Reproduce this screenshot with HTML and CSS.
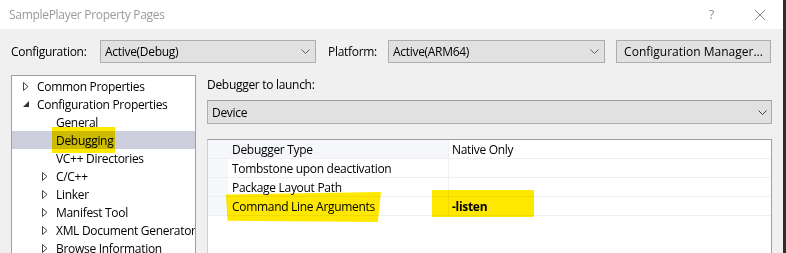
FILE: index.html
```html
<!DOCTYPE html>
<html lang="en">
<head>
  <meta charset="UTF-8">
  <title>SamplePlayer Property Pages</title>
  <link rel="stylesheet" href="styles.css">
</head>
<body>
  <div class="window">
    <div class="titlebar">
      <span class="title">SamplePlayer Property Pages</span>
      <span class="help">?</span>
      <span class="close">
        <svg width="12" height="12" viewBox="0 0 12 12"><path d="M1 1 L11 11 M11 1 L1 11" stroke="#8a8a8a" stroke-width="1" fill="none"/></svg>
      </span>
    </div>

    <div class="main">
      <div class="config-row">
        <label class="field-label">Configuration:</label>
        <div class="combo combo-config">
          <span>Active(Debug)</span>
          <svg class="chev" width="9" height="5" viewBox="0 0 9 5"><path d="M0.5 0.5 L4.5 4.5 L8.5 0.5" stroke="#606060" fill="none"/></svg>
        </div>
        <label class="field-label platform-label">Platform:</label>
        <div class="combo combo-platform">
          <span>Active(ARM64)</span>
          <svg class="chev" width="9" height="5" viewBox="0 0 9 5"><path d="M0.5 0.5 L4.5 4.5 L8.5 0.5" stroke="#606060" fill="none"/></svg>
        </div>
        <button class="btn">Configuration Manager...</button>
      </div>

      <div class="content">
        <div class="tree">
          <div class="node lvl0"><span class="tw"><svg width="6" height="9" viewBox="0 0 6 9"><path d="M0.5 0.5 L5 4.5 L0.5 8.5 Z" stroke="#444" fill="none"/></svg></span>Common Properties</div>
          <div class="node lvl0"><span class="tw"><svg width="6" height="6" viewBox="0 0 6 6"><path d="M6 0 L6 6 L0 6 Z" fill="#333"/></svg></span>Configuration Properties</div>
          <div class="node lvl1"><span class="tw"></span>General</div>
          <div class="node lvl1 selected"><span class="tw"></span><span class="marked mark-debugging">Debugging</span></div>
          <div class="node lvl1"><span class="tw"></span>VC++ Directories</div>
          <div class="node lvl1"><span class="tw"><svg width="6" height="9" viewBox="0 0 6 9"><path d="M0.5 0.5 L5 4.5 L0.5 8.5 Z" stroke="#444" fill="none"/></svg></span>C/C++</div>
          <div class="node lvl1"><span class="tw"><svg width="6" height="9" viewBox="0 0 6 9"><path d="M0.5 0.5 L5 4.5 L0.5 8.5 Z" stroke="#444" fill="none"/></svg></span>Linker</div>
          <div class="node lvl1"><span class="tw"><svg width="6" height="9" viewBox="0 0 6 9"><path d="M0.5 0.5 L5 4.5 L0.5 8.5 Z" stroke="#444" fill="none"/></svg></span>Manifest Tool</div>
          <div class="node lvl1"><span class="tw"><svg width="6" height="9" viewBox="0 0 6 9"><path d="M0.5 0.5 L5 4.5 L0.5 8.5 Z" stroke="#444" fill="none"/></svg></span>XML Document Generator</div>
          <div class="node lvl1"><span class="tw"><svg width="6" height="9" viewBox="0 0 6 9"><path d="M0.5 0.5 L5 4.5 L0.5 8.5 Z" stroke="#444" fill="none"/></svg></span>Browse Information</div>
        </div>

        <div class="page">
          <div class="page-label">Debugger to launch:</div>
          <div class="combo combo-debugger">
            <span>Device</span>
            <svg class="chev" width="9" height="5" viewBox="0 0 9 5"><path d="M0.5 0.5 L4.5 4.5 L8.5 0.5" stroke="#404040" fill="none"/></svg>
          </div>

          <div class="grid">
            <div class="prop current">
              <div class="gutter"></div>
              <div class="name">Debugger Type</div>
              <div class="value">Native Only</div>
            </div>
            <div class="prop">
              <div class="gutter"></div>
              <div class="name">Tombstone upon deactivation</div>
              <div class="value"></div>
            </div>
            <div class="prop">
              <div class="gutter"></div>
              <div class="name">Package Layout Path</div>
              <div class="value"></div>
            </div>
            <div class="prop">
              <div class="gutter"></div>
              <div class="name"><span class="marked mark-args">Command Line Arguments</span></div>
              <div class="value"><span class="mark-value"></span><b>-listen</b></div>
            </div>
          </div>
        </div>
      </div>
    </div>
  </div>
  <div class="edge"></div>
</body>
</html>
```

FILE: styles.css
```css
* {
  margin: 0;
  padding: 0;
  box-sizing: border-box;
}

body {
  font-family: 'Open Sans', 'Noto Sans', sans-serif;
  font-size: 12px;
  letter-spacing: -0.3px;
  color: #000;
  width: 786px;
  height: 253px;
  overflow: hidden;
  display: flex;
  background: #f0f0f0;
}

.window {
  flex: 1;
  display: flex;
  flex-direction: column;
  min-width: 0;
}

.edge {
  width: 3px;
  background: #2e2e2e;
}

.titlebar {
  height: 29px;
  background: #fff;
  display: flex;
  align-items: center;
  padding-left: 9px;
}

.title {
  color: #9a9a9a;
  flex: 1;
}

.help {
  color: #8a8a8a;
  width: 14px;
  margin-right: 31px;
}

.close {
  width: 12px;
  height: 12px;
  margin-right: 17px;
  display: flex;
}

.main {
  flex: 1;
  padding: 11px 11px 0 11px;
  display: flex;
  flex-direction: column;
  min-height: 0;
}

/* top row with configuration / platform */
.config-row {
  display: flex;
  align-items: center;
  height: 23px;
}

.field-label {
  width: 89px;
}

.platform-label {
  width: 60px;
  margin-left: 12px;
}

.combo {
  height: 23px;
  background: #e1e1e1;
  border: 1px solid #adadad;
  display: flex;
  align-items: center;
  padding-left: 4px;
  padding-right: 5px;
}

.combo span {
  flex: 1;
}

.combo-config {
  width: 216px;
}

.combo-platform {
  width: 217px;
}

.btn {
  font: inherit;
  margin-left: 11px;
  width: 155px;
  height: 23px;
  background: #e1e1e1;
  border: 1px solid #adadad;
  color: #000;
}

.content {
  flex: 1;
  display: flex;
  margin-top: 12px;
  min-height: 0;
}

/* category tree */
.tree {
  width: 185px;
  background: #fff;
  border: 1px solid #a0a0a0;
  border-bottom: none;
  padding-top: 1px;
  overflow: hidden;
}

.node {
  height: 18px;
  display: flex;
  align-items: center;
  white-space: nowrap;
}

.lvl0 {
  padding-left: 10px;
}

.lvl1 {
  padding-left: 29px;
}

.tw {
  width: 15px;
  flex-shrink: 0;
  display: flex;
  align-items: center;
  padding-left: 1px;
}

.node.selected {
  background: #cccedb;
}

.marked {
  position: relative;
}

.marked::before {
  content: '';
  position: absolute;
  background: #ffe800;
  mix-blend-mode: multiply;
}

.mark-debugging::before {
  left: -4px;
  right: -2px;
  top: -5px;
  bottom: -4px;
}

/* property page */
.page {
  flex: 1;
  margin-left: 11px;
  display: flex;
  flex-direction: column;
}

.page-label {
  height: 18px;
  line-height: 19px;
}

.combo-debugger {
  margin-top: 7px;
  height: 24px;
  border-top-color: #9a9a9a;
  padding-right: 4px;
}

.grid {
  margin-top: 15px;
  flex: 1;
  background: #fff;
  border: 1px solid #a0a0a0;
  border-left-color: #cfcfcf;
  border-bottom: none;
}

.prop {
  display: flex;
  height: 19px;
  border-bottom: 1px solid #f0f0f0;
}

.gutter {
  width: 20px;
  background: #f5f7fb;
}

.name {
  width: 221px;
  padding-left: 4px;
  padding-top: 1px;
  line-height: 18px;
  border-right: 1px solid #f0f0f0;
}

.prop.current .name {
  background: #f5f7fb;
}

.value {
  flex: 1;
  padding-left: 3px;
  padding-top: 1px;
  line-height: 18px;
  position: relative;
}

.mark-args::before {
  left: -6px;
  right: -6px;
  top: -6px;
  bottom: -7px;
  clip-path: polygon(0 8%, 100% 0, 98% 100%, 1% 96%);
}

.mark-value {
  position: absolute;
  left: -17px;
  top: -7px;
  width: 102px;
  height: 27px;
  background: #ffe800;
  mix-blend-mode: multiply;
}
```
